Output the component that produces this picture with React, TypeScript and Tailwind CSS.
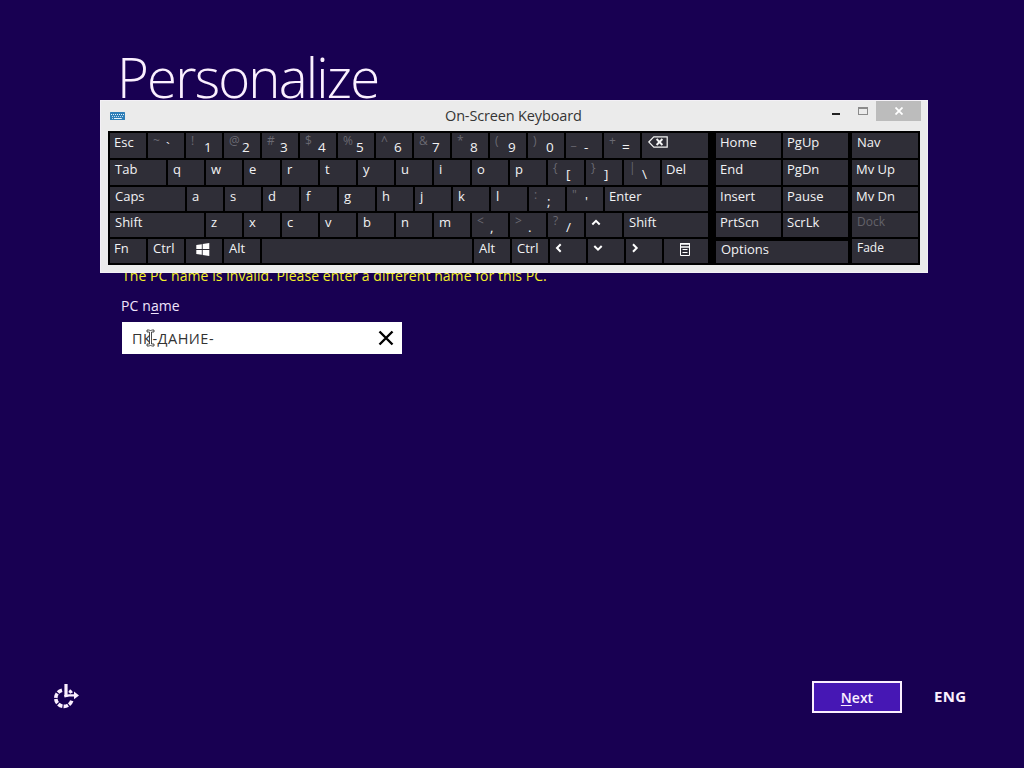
import React from 'react';
import { clsx } from 'clsx';

type KeyDef = {
  label?: string;
  alt?: string;
  width?: string;
  className?: string;
  leading?: string;
  icon?: React.ReactNode;
};

function Chevron({ d }: { d: string }) {
  return (
    <svg width="10" height="10" viewBox="0 0 10 10" fill="none" stroke="white" strokeWidth="2">
      <path d={d} />
    </svg>
  );
}

const backspaceIcon = (
  <svg width="20" height="12" viewBox="0 0 20 12" fill="none" stroke="#f4f4f4" strokeWidth="1.2">
    <path d="M0.8 6L5.8 0.9H19.2V11.1H5.8Z" />
    <path d="M8.6 3L14.4 9M14.4 3L8.6 9" strokeWidth="1.9" />
  </svg>
);

const windowsIcon = (
  <svg width="14" height="13" viewBox="0 0 14 13" fill="white">
    <path d="M0.3 2L5.8 1.2V6H0.3ZM6.7 1L13.3 0V6H6.7ZM0.3 7H5.8V11.8L0.3 11ZM6.7 7H13.3V13L6.7 12Z" />
  </svg>
);

const menuIcon = (
  <svg width="10" height="13" viewBox="0 0 10 13" fill="none" stroke="white">
    <path d="M0.5 0.5H9.5V12.5H0.5Z" />
    <path d="M0 1H10M0 4H10" strokeWidth="1.4" />
    <path d="M2.5 6.5H7.5M2.5 9.5H7.5" />
  </svg>
);

const letters = (chars: string): KeyDef[] => chars.split('').map((label) => ({ label }));
const pairs = (items: string[]): KeyDef[] => items.map((p) => ({ alt: p[0], label: p[1] }));

const rows: KeyDef[][] = [
  [
    { label: 'Esc', className: 'pl-[4px]' },
    ...pairs(['~`', '!1', '@2', '#3', '$4', '%5', '^6', '&7', '*8', '(9', ')0', '_-', '+=']),
    { icon: backspaceIcon, width: 'w-[66px]', className: 'pl-[6px] pt-[3px]' },
  ],
  [
    { label: 'Tab', width: 'w-[56px]' },
    ...letters('qwertyuiop'),
    ...pairs(['{[', '}]', '|\\']),
    { label: 'Del', width: 'w-[46px]', className: 'pl-[4px]' },
  ],
  [
    { label: 'Caps', width: 'w-[75px]' },
    ...letters('asdfghjkl'),
    ...pairs([':;', '"\'']),
    { label: 'Enter', width: 'w-[103px]', className: 'pl-[4px]' },
  ],
  [
    { label: 'Shift', width: 'w-[94px]' },
    ...letters('zxcvbnm'),
    ...pairs(['<,', '>.', '?/']),
    { icon: <Chevron d="M1.3 6.5L5 2.8L8.7 6.5" />, className: 'pl-[5px] pt-[5px]' },
    { label: 'Shift', width: 'w-[84px]' },
  ],
  [
    { label: 'Fn', className: 'pl-[4px]' },
    { label: 'Ctrl' },
    { icon: windowsIcon, className: 'pl-[10px] pt-[4px]' },
    { label: 'Alt' },
    { width: 'w-[210px]' },
    { label: 'Alt' },
    { label: 'Ctrl' },
    { icon: <Chevron d="M6.7 1.3L3 5L6.7 8.7" />, className: 'pl-[4px] pt-[4px]' },
    { icon: <Chevron d="M1.3 3L5 6.7L8.7 3" />, className: 'pl-[5px] pt-[4px]' },
    { icon: <Chevron d="M3 1.3L6.7 5L3 8.7" />, className: 'pl-[4px] pt-[4px]' },
    { icon: menuIcon, width: 'w-[44px]', className: 'pl-[16px] pt-[4px]' },
  ],
];

const navRows = [
  ['Home', 'PgUp'],
  ['End', 'PgDn'],
  ['Insert', 'Pause'],
  ['PrtScn', 'ScrLk'],
];

const sideKeys = ['Nav', 'Mv Up', 'Mv Dn', 'Dock', 'Fade'];

const rowHeight = (i: number) => (i < 2 ? 'h-[25px]' : 'h-[24px]');

function Key({ label, alt, width = 'w-[36px]', className = 'pl-[5px]', leading = 'leading-[18px]', icon }: KeyDef) {
  return (
    <div className={clsx('flex h-full shrink-0 items-start whitespace-pre bg-[#2f2e37]', width, className)}>
      {alt && <span className="w-[13px] text-[12px] leading-[16px] text-[#6a6972]">{alt}</span>}
      {label && <span className={clsx(leading, alt && 'pt-[5px] text-[13.5px]')}>{label}</span>}
      {icon}
    </div>
  );
}

function KeyboardWindow() {
  return (
    <div className="absolute left-[100px] top-[100px] flex h-[173px] w-[828px] flex-col border border-[#f3f0f6] bg-[#ebebeb]">
      <div className="flex h-[30px] items-start">
        <svg className="ml-[9px] mt-[11px]" width="16" height="8" viewBox="0 0 16 8">
          <rect width="15" height="8" rx="0.5" fill="#2f7fb8" />
          <path d="M1 2.5H14M5 6.5H10" stroke="#e4f1fa" strokeDasharray="1 1" />
          <path d="M2 4.5H14M2 6.5H4M11 6.5H13" stroke="#b8d8ec" strokeDasharray="1 1" />
          <path d="M4 6.5H11" stroke="#e4f1fa" />
        </svg>
        <div className="ml-[319px] w-[370px] pt-[5px] text-[14.5px] leading-5 tracking-[-0.15px] text-[#353535]">
          On-Screen Keyboard
        </div>
        <div className="ml-[17px] mt-[12px] h-[2px] w-[8px] bg-[#222]" />
        <div className="ml-[18px] mt-[6px] h-[8px] w-[10px] border border-t-2 border-[#8b8b8b]" />
        <div className="ml-auto mr-[6px] flex h-[20px] w-[45px] items-center justify-center bg-[#bcbcbc]">
          <svg width="8" height="8" viewBox="0 0 8 8" stroke="white" strokeWidth="1.8">
            <path d="M0.5 0.5L7.5 7.5M7.5 0.5L0.5 7.5" />
          </svg>
        </div>
      </div>

      <div className="ml-[7px] flex h-[134px] w-[812px] bg-black p-[2px] text-[13px] text-[#f2f2f4]">
        <div className="flex w-[598px] flex-col gap-[2px]">
          {rows.map((row, i) => (
            <div key={i} className={clsx('flex gap-[2px]', rowHeight(i))}>
              {row.map((k, j) => (
                <Key key={j} {...k} />
              ))}
            </div>
          ))}
        </div>

        <div className="ml-[8px] flex w-[132px] flex-col gap-[2px]">
          {navRows.map((row, i) => (
            <div key={i} className={clsx('flex gap-[2px]', rowHeight(i))}>
              {row.map((label) => (
                <Key key={label} label={label} width="w-[65px]" className="pl-[4px]" />
              ))}
            </div>
          ))}
          <div className="mt-[2px] h-[22px]">
            <Key label="Options" width="w-[132px]" leading="leading-[16px]" />
          </div>
        </div>

        <div className="ml-[4px] flex w-[66px] flex-col gap-[2px]">
          {sideKeys.map((label, i) => (
            <div key={label} className={rowHeight(i)}>
              <Key
                label={label}
                width="w-[66px]"
                className={clsx(
                  i > 2 ? 'pl-[5px] text-[12px]' : i > 0 ? 'pl-[4px]' : 'pl-[5px]',
                  label === 'Dock' && 'text-[#63626a]',
                )}
              />
            </div>
          ))}
        </div>
      </div>
    </div>
  );
}

export default function App() {
  return (
    <div className="relative flex h-[768px] w-[1024px] flex-col overflow-hidden bg-[#180052] font-['Open_Sans','Noto_Sans',sans-serif] text-white">
      <div className="flex flex-col pl-[122px]">
        <h1 className="-ml-[5px] pt-[39px] text-[54.5px] font-light leading-[76px] tracking-[-1.8px] text-[#fbf0ff]">
          Personalize
        </h1>
        <p className="mt-[151px] text-[14px] leading-5 tracking-[0.06px] text-[#f4f02a]">
          The PC name is invalid. Please enter a different name for this PC.
        </p>
        <label className="-ml-px mt-[10px] text-[14px] leading-5 tracking-[0.1px] text-[#f0e4fb]">
          PC n<span className="underline underline-offset-2">a</span>me
        </label>
        <div className="relative mt-[6px] flex h-[32px] w-[280px] items-center justify-between bg-white pl-[10px] pr-[8px] text-[14.5px] tracking-[0.5px] text-[#333]">
          <span className="pt-[2px]">ПК-ДАНИЕ-</span>
          <svg width="16" height="16" viewBox="0 0 16 16" stroke="black" strokeWidth="2.4">
            <path d="M1.5 1.5L14.5 14.5M14.5 1.5L1.5 14.5" />
          </svg>
          {/* text cursor */}
          <svg className="absolute left-[24px] top-[7px]" width="9" height="18" viewBox="0 0 9 18" fill="none">
            <path d="M1 1H3.5L4.5 2L5.5 1H8V3H5.5V15H8V17H5.5L4.5 16L3.5 17H1V15H3.5V3H1Z" fill="white" stroke="#222" strokeWidth="0.8" />
          </svg>
        </div>
      </div>

      <div className="mt-auto flex h-[87px] items-start pl-[53px]">
        <svg className="mt-[2px]" width="27" height="27" viewBox="0 0 27 27" fill="none" stroke="#fbefff">
          <path d="M9 7.2A8.2 8.2 0 1 0 19 16.8" strokeWidth="3.6" strokeDasharray="4.6 1.2" />
          <path d="M16.2 7.6A8.2 8.2 0 0 1 18.6 10" strokeWidth="3.2" />
          <path d="M13 1V13.5" strokeWidth="3.2" />
          <path d="M11.4 13.2L16 12.4H22" strokeWidth="2.4" />
          <path d="M21 8.6L26 12.4L21 16.2Z" fill="#fbefff" stroke="none" />
        </svg>
        <button className="ml-[732px] h-[32px] w-[90px] border-2 border-[#fbefff] bg-[#4617b4] pt-px text-[14px] font-semibold leading-[27px] text-[#fbefff]">
          <span className="underline underline-offset-2">N</span>ext
        </button>
        <span className="ml-[32px] pt-[5px] text-[15px] font-bold leading-5 tracking-[0.3px] text-[#fbefff]">ENG</span>
      </div>

      <KeyboardWindow />
    </div>
  );
}
